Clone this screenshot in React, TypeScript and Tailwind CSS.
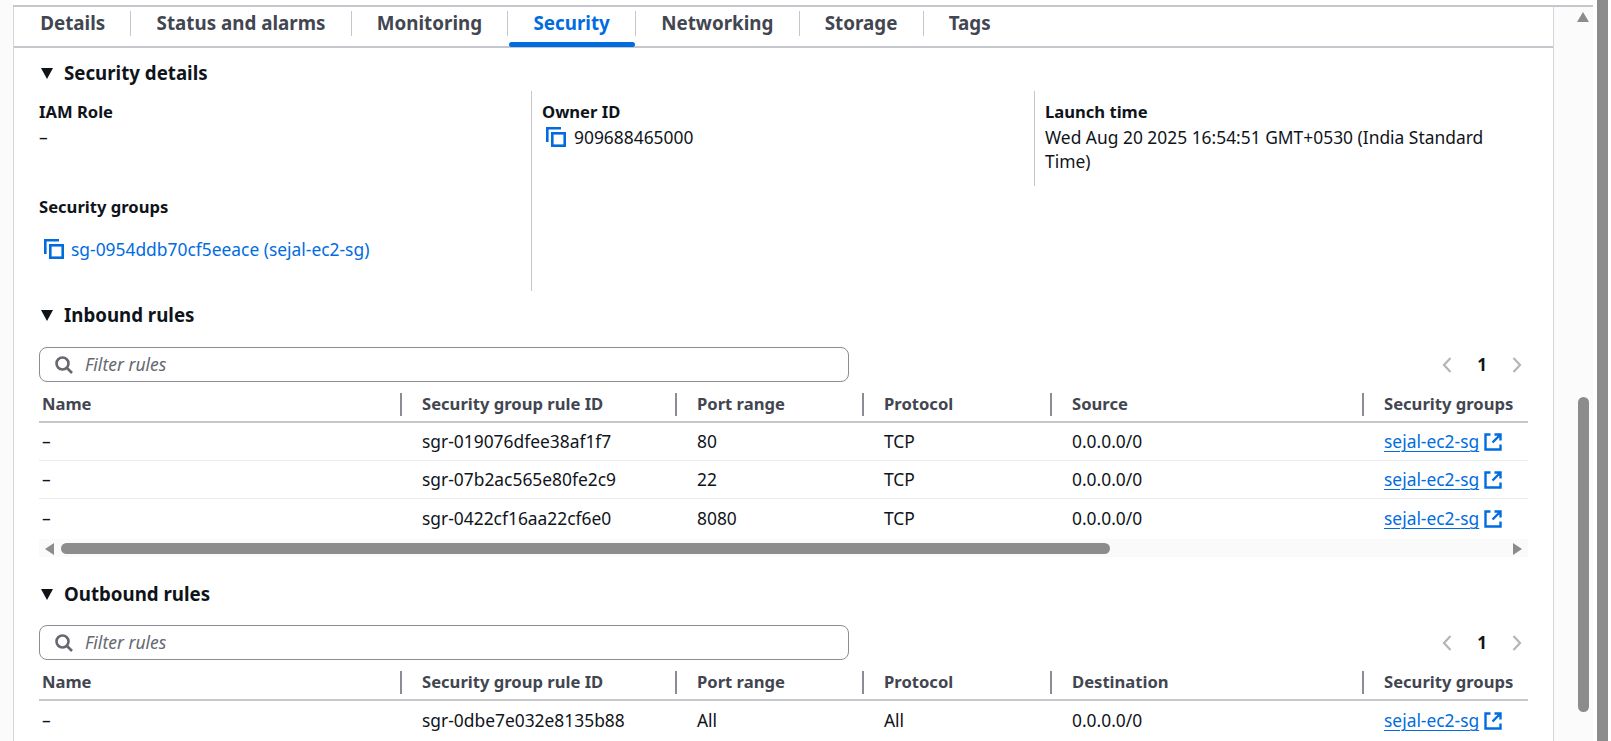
const tabs = ["Details", "Status and alarms", "Monitoring", "Security", "Networking", "Storage", "Tags"];

const inbound = [
  { id: "sgr-019076dfee38af1f7", port: "80" },
  { id: "sgr-07b2ac565e80fe2c9", port: "22" },
  { id: "sgr-0422cf16aa22cf6e0", port: "8080" },
];

function CopyIcon() {
  return (
    <svg viewBox="0 0 20 20" className="h-5 w-5 shrink-0 text-[#006ce0]" fill="none" stroke="currentColor" strokeWidth="2.6">
      <path d="M1.3 15V1.3H15" />
      <rect x="6.3" y="6.3" width="12.4" height="12.4" />
    </svg>
  );
}

function ExternalIcon() {
  return (
    <svg viewBox="0 0 18 18" className="mt-[1px] ml-[1px] h-[18px] w-[18px] shrink-0 text-[#006ce0]" fill="none" stroke="currentColor" strokeWidth="2.4">
      <path d="M6.5 1.5h-5v15h15v-5" />
      <path d="M10.5 1.5h6v6M16 2 8.5 9.5" />
    </svg>
  );
}

function SearchIcon() {
  return (
    <svg viewBox="0 0 18 18" className="h-[18px] w-[18px] shrink-0 text-[#656871]" fill="none" stroke="currentColor" strokeWidth="2.6">
      <circle cx="7.5" cy="7.5" r="6" />
      <path d="m12 12 5 5" />
    </svg>
  );
}

function SectionTitle({ children }: { children: string }) {
  return (
    <div className="flex h-[26px] items-center pl-[2px]">
      <span className="mr-[11px] h-0 w-0 border-x-[6.5px] border-t-[11px] border-x-transparent border-t-[#0f141a]" />
      <span className="text-[18.7px] leading-[26px] font-bold text-[#0f141a]">{children}</span>
    </div>
  );
}

function FilterBar() {
  return (
    <div className="flex h-[35px] items-center">
      <div className="flex h-[35px] w-[810px] items-center rounded-[8px] border border-[#8c8c94] pl-[15px]">
        <SearchIcon />
        <span className="ml-[12px] text-[17.5px] text-[#656871] italic">Filter rules</span>
      </div>
      <div className="mr-[6px] ml-auto flex items-center gap-[25px] text-[#b4b4bb]">
        <svg viewBox="0 0 10 16" className="h-4 w-[10px]" fill="none" stroke="currentColor" strokeWidth="2.2">
          <path d="M8.5 1 2 8l6.5 7" />
        </svg>
        <span className="w-[10px] text-center text-[17px] font-bold text-[#0f141a]">1</span>
        <svg viewBox="0 0 10 16" className="h-4 w-[10px]" fill="none" stroke="currentColor" strokeWidth="2.2">
          <path d="M1.5 1 8 8l-6.5 7" />
        </svg>
      </div>
    </div>
  );
}

function Th({ className, label, first }: { className: string; label: string; first?: boolean }) {
  return (
    <div className={`flex h-[24px] items-center ${className}`}>
      {!first && <span className="mr-[20px] h-[23px] w-[2px] bg-[#8c8c94]" />}
      <span className="text-[16.6px] font-bold text-[#424650]">{label}</span>
    </div>
  );
}

function Row({ id, port, protocol, last }: { id: string; port: string; protocol: string; last?: boolean }) {
  return (
    <div className={`flex items-center text-[17.4px] text-[#0f141a] ${last ? "h-[39px]" : "h-[38px] border-b border-[#e9ebed]"}`}>
      <div className="w-[361px] pl-[3px]">–</div>
      <div className="w-[275px] pl-[22px]">{id}</div>
      <div className="w-[187px] pl-[22px]">{port}</div>
      <div className="w-[188px] pl-[22px]">{protocol}</div>
      <div className="w-[312px] pl-[22px]">0.0.0.0/0</div>
      <div className="flex items-center pl-[22px]">
        <span className="pr-[4px] text-[#006ce0] underline decoration-1 underline-offset-[3px]">sejal-ec2-sg</span>
        <ExternalIcon />
      </div>
    </div>
  );
}

function TableHead({ last }: { last: string }) {
  return (
    <div className="mt-[10px] flex h-[31px] items-start border-b-2 border-[#c6c6cd]">
      <Th first className="w-[361px] pl-[3px]" label="Name" />
      <Th className="w-[275px]" label="Security group rule ID" />
      <Th className="w-[187px]" label="Port range" />
      <Th className="w-[188px]" label="Protocol" />
      <Th className="w-[312px]" label={last} />
      <Th className="w-[166px]" label="Security groups" />
    </div>
  );
}

export default function App() {
  return (
    <div className="flex h-[741px] w-[1611px] overflow-hidden bg-white font-['Noto_Sans',sans-serif]">
      <div className="h-full w-[13px] shrink-0 bg-[#fbfbfb]" />
      <div className="mt-[5px] flex w-[1580px] shrink-0 border-t-2 border-t-[#c6c6cd]">
        <main className="w-[1541px] shrink-0 border-x border-x-[#d5d5da]">
          <nav className="flex h-[41px] items-start border-b-2 border-[#c6c6cd] pl-[1px]">
            {tabs.map((t, i) => (
              <div key={t} className={`relative mt-[4px] flex h-[25px] items-center px-[25.2px] text-[18.8px] font-bold ${i < tabs.length - 1 ? "border-r border-[#c6c6cd]" : ""} ${t === "Security" ? "text-[#006ce0]" : "text-[#424650]"}`}>
                {t}
                {t === "Security" && <span className="absolute right-0 bottom-[-11px] left-[1px] h-[5px] rounded-full bg-[#006ce0]" />}
              </div>
            ))}
          </nav>

          <div className="pt-[12px] pr-[25px] pl-[25px]">
            <SectionTitle>Security details</SectionTitle>
            <div className="mt-[5px] flex h-[200px] text-[17.4px] leading-[24px] text-[#0f141a]">
              <div className="w-[492px] pt-[9px]">
                <div className="text-[16.6px] font-bold">IAM Role</div>
                <div className="mt-[1px]">–</div>
                <div className="mt-[46px] text-[16.6px] font-bold">Security groups</div>
                <div className="mt-[18px] flex items-center gap-[7px] pl-[5px] text-[#006ce0]">
                  <CopyIcon />
                  sg-0954ddb70cf5eeace (sejal-ec2-sg)
                </div>
              </div>
              <div className="w-[503px] border-l border-[#c6c6cd] pt-[9px] pl-[10px]">
                <div className="text-[16.6px] font-bold">Owner ID</div>
                <div className="mt-[1px] flex items-center gap-[8px] pl-[4px]">
                  <CopyIcon />
                  909688465000
                </div>
              </div>
              <div className="h-[95px] flex-1 border-l border-[#c6c6cd] pt-[9px] pl-[10px]">
                <div className="text-[16.6px] font-bold">Launch time</div>
                <div className="mt-[1px] w-[450px]">Wed Aug 20 2025 16:54:51 GMT+0530 (India Standard Time)</div>
              </div>
            </div>

            <div className="mt-[11px]">
              <SectionTitle>Inbound rules</SectionTitle>
            </div>
            <div className="mt-[19px]">
              <FilterBar />
            </div>
            <TableHead last="Source" />
            {inbound.map((r, i) => (
              <Row key={r.id} id={r.id} port={r.port} protocol="TCP" last={i === inbound.length - 1} />
            ))}
            <div className="mt-[1px] flex h-[18px] items-center bg-[#fafafa] px-[6px] pt-[1px]">
              <span className="h-0 w-0 border-y-[6px] border-r-[9px] border-y-transparent border-r-[#8c8c8c]" />
              <span className="ml-[7px] h-[11px] w-[1049px] rounded-full bg-[#8c8c8c]" />
              <span className="ml-auto h-0 w-0 border-y-[6px] border-l-[9px] border-y-transparent border-l-[#8c8c8c]" />
            </div>

            <div className="mt-[24px]">
              <SectionTitle>Outbound rules</SectionTitle>
            </div>
            <div className="mt-[18px]">
              <FilterBar />
            </div>
            <TableHead last="Destination" />
            <Row id="sgr-0dbe7e032e8135b88" port="All" protocol="All" last />
          </div>
        </main>

        <div className="relative flex-1 bg-[#fbfbfb]">
          <span className="absolute top-[5px] left-[23px] h-0 w-0 border-x-[6.5px] border-b-[10px] border-x-transparent border-b-[#8c8c8c]" />
          <span className="absolute top-[390px] left-[24px] h-[315px] w-[11px] rounded-full bg-[#8c8c8c]" />
        </div>
      </div>
      <div className="ml-[4px] h-full w-[11px] shrink-0 bg-[#8c8c8c]" />
    </div>
  );
}
